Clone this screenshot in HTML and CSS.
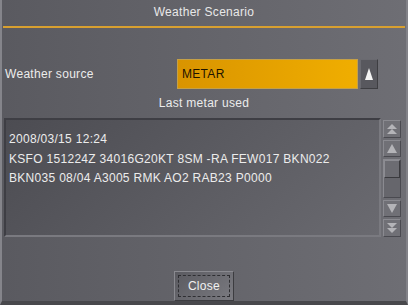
FILE: index.html
```html
<!DOCTYPE html>
<html lang="en">
<head>
    <meta charset="UTF-8">
    <title>Weather Scenario</title>
    <link rel="stylesheet" href="styles.css">
</head>
<body>
    <div class="dialog">
        <div class="title">Weather Scenario</div>
        <div class="title-rule"></div>

        <div class="source-row">
            <span class="label">Weather source</span>
            <div class="combo">METAR</div>
            <div class="combo-btn">
                <svg width="10" height="14" viewBox="0 0 10 14"><polygon points="5,1 9,13 1,13" fill="#f4f4f4"/></svg>
            </div>
        </div>

        <div class="caption">Last metar used</div>

        <div class="metar-area">
            <div class="metar-text">
                <div>2008/03/15 12:24</div>
                <div>KSFO 151224Z 34016G20KT 8SM -RA FEW017 BKN022</div>
                <div>BKN035 08/04 A3005 RMK AO2 RAB23 P0000</div>
            </div>
            <div class="scrollbar">
                <div class="sb-btn">
                    <svg width="12" height="12" viewBox="0 0 12 12"><polygon points="6,1 11,6 1,6" fill="#b4b4b8"/><polygon points="6,6 11,11 1,11" fill="#b4b4b8"/></svg>
                </div>
                <div class="sb-btn">
                    <svg width="12" height="12" viewBox="0 0 12 12"><polygon points="6,2 11,11 1,11" fill="#b4b4b8"/></svg>
                </div>
                <div class="sb-track">
                    <div class="sb-thumb"></div>
                </div>
                <div class="sb-btn">
                    <svg width="12" height="12" viewBox="0 0 12 12"><polygon points="1,1 11,1 6,10" fill="#b4b4b8"/></svg>
                </div>
                <div class="sb-btn">
                    <svg width="12" height="12" viewBox="0 0 12 12"><polygon points="1,1 11,1 6,6" fill="#b4b4b8"/><polygon points="1,6 11,6 6,11" fill="#b4b4b8"/></svg>
                </div>
            </div>
        </div>

        <div class="footer">
            <button class="close-btn"><span>Close</span></button>
        </div>
    </div>
</body>
</html>
```

FILE: styles.css
```css
body { margin: 0; background: #3a3a3e; font-family: "Liberation Sans", Arial, sans-serif; font-size: 12px; letter-spacing: 0.3px; color: #ececec; }

.dialog {
    width: 408px;
    height: 305px;
    box-sizing: border-box;
    background: linear-gradient(to right, #5a5a60, #6e6e74);
    border-left: 2px solid #85858b;
    border-right: 2px solid #828288;
    border-bottom: 4px solid #48484c;
    display: flex;
    flex-direction: column;
}

.title { height: 26px; line-height: 24px; text-align: center; color: #e8e8e8; }
.title-rule { height: 2px; margin: 0 1px 0 1px; background: #d8a030; }

.source-row {
    display: flex;
    align-items: center;
    margin-top: 30px;
    height: 31px;
}
.label { width: 172px; padding-left: 3px; }
.combo {
    width: 175px;
    height: 28px;
    line-height: 28px;
    padding-left: 4px;
    border: 1px solid #c4a048;
    background: linear-gradient(to right, #d99400, #f0ae00);
    color: #1e1400;
}
.combo-btn {
    width: 16px;
    height: 28px;
    margin-left: 2px;
    border: 1px solid #3e3e42;
    border-top-color: #6a6a70;
    border-left-color: #6a6a70;
    background: #58585e;
    display: flex;
    align-items: center;
    justify-content: center;
}

.caption { text-align: center; margin-top: 7px; height: 22px; }

.metar-area { display: flex; margin-left: 2px; height: 119px; }
.metar-text {
    width: 377px;
    border: 2px solid #3e3e44;
    border-right-color: #7a7a80;
    border-bottom-color: #7a7a80;
    background: linear-gradient(135deg, #4c4c52, #6a6a70);
    padding: 10px 0 0 3px;
    line-height: 19.5px;
    box-sizing: border-box;
}
.scrollbar {
    width: 18px;
    margin-left: 2px;
    display: flex;
    flex-direction: column;
    gap: 2px;
    padding-top: 2px;
}
.sb-btn {
    height: 16px;
    border: 1px solid #4a4a50;
    border-top-color: #8a8a90;
    border-left-color: #8a8a90;
    background: #707076;
    display: flex;
    align-items: center;
    justify-content: center;
}
.sb-track {
    height: 38px;
    border: 1px solid #4a4a50;
    border-top-color: #8a8a90;
    border-left-color: #8a8a90;
    background: #66666c;
}
.sb-thumb {
    height: 16px;
    border: 1px solid #3a3a3e;
    border-top-color: #8c8c92;
    border-left-color: #8c8c92;
    background: #6c6c72;
}

.footer { flex: 1; display: flex; justify-content: center; align-items: flex-end; }
.close-btn {
    width: 60px;
    height: 30px;
    padding: 3px;
    border: 1px solid #3c3c40;
    border-top-color: #8a8a90;
    border-left-color: #8a8a90;
    background: linear-gradient(135deg, #5a5a60, #7a7a80);
    font-family: "Liberation Sans", Arial, sans-serif;
    font-size: 12px;
    letter-spacing: 0.3px;
    color: #f0f0f0;
    display: flex;
}
.close-btn span {
    flex: 1;
    border: 1px dashed #2e2e32;
    display: flex;
    align-items: center;
    justify-content: center;
}
```
